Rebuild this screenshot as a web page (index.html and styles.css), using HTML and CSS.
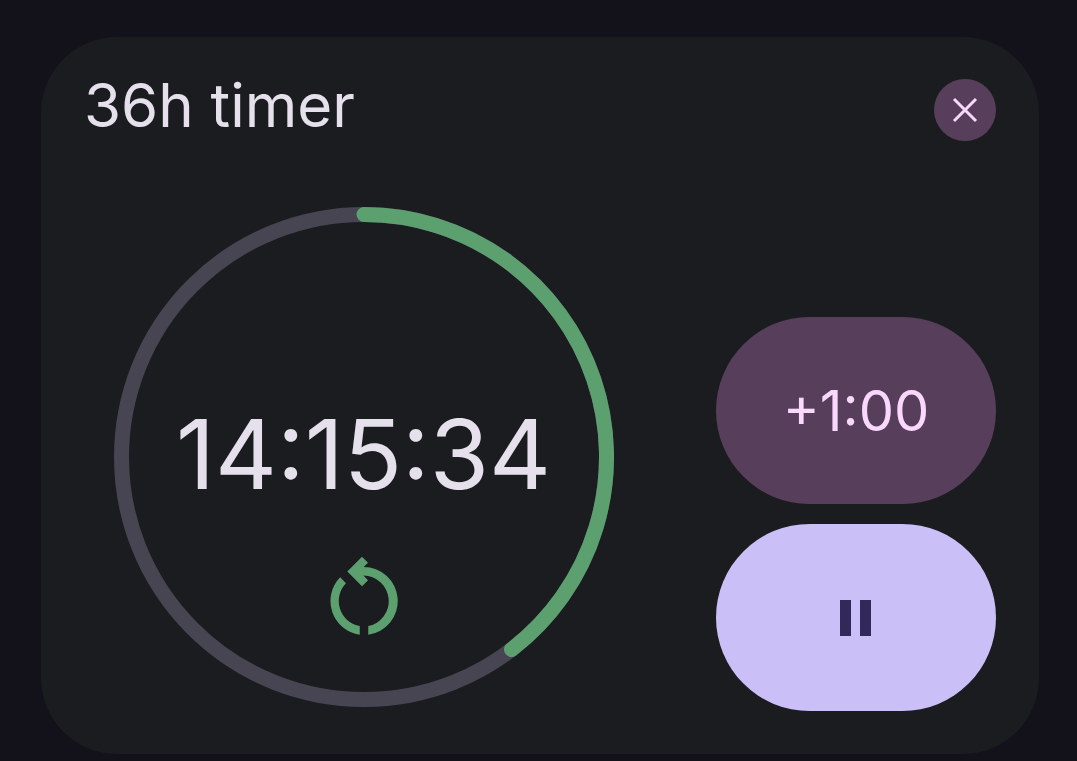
FILE: index.html
```html
<!DOCTYPE html>
<html lang="en">
<head>
<meta charset="utf-8">
<meta name="viewport" content="width=device-width, initial-scale=1">
<title>36h timer</title>
<link rel="stylesheet" href="styles.css">
</head>
<body>
<main class="card">
  <header class="card-header">
    <h1 class="title">36h timer</h1>
    <button class="close" type="button" aria-label="Close">
      <svg width="26" height="26" viewBox="0 0 26 26" aria-hidden="true"><path d="M2 2 24 24M24 2 2 24"/></svg>
    </button>
  </header>
  <div class="card-body">
    <div class="dial">
      <svg class="ring" viewBox="0 0 500 500" aria-hidden="true">
        <circle class="track" cx="250" cy="250" r="242.5"/>
        <path class="progress" d="M250 7.5A242.5 242.5 0 0 1 397.5 442.5"/>
      </svg>
      <div class="readout">
        <time class="time">14:15:34</time>
        <button class="reset" type="button" aria-label="Reset">
          <svg width="68" height="80" viewBox="0 0 68 80" aria-hidden="true">
            <path d="M33.4 11.3 38 6.7 32 .7 17.3 15.5 32 30.2 38 24.3 33.4 19.6A25.5 25.5 0 0 1 38.25 70.1V78.7A34 34 0 0 0 33.4 11Z"/>
            <path d="M10.2 21.2A34 34 0 0 0 29.75 78.7V70.1A25.5 25.5 0 0 1 16 27.2Z"/>
          </svg>
        </button>
      </div>
    </div>
    <div class="controls">
      <button class="pill add" type="button">+1:00</button>
      <button class="pill pause" type="button" aria-label="Pause">
        <svg width="32" height="36" viewBox="0 0 32 36" aria-hidden="true"><path d="M0 0H11V36H0ZM20 0H31V36H20Z"/></svg>
      </button>
    </div>
  </div>
</main>
</body>
</html>
```
FILE: styles.css
```css
* {
  box-sizing: border-box;
}

body {
  margin: 0;
  min-height: 100vh;
  padding: 37px 38px 7px 41px;
  display: flex;
  background: #13111a;
  color: #e5e0ec;
  font-family: Inter, Lato, sans-serif;
}

button {
  padding: 0;
  border: 0;
  background: none;
  color: inherit;
  font: inherit;
  cursor: pointer;
}

svg {
  display: block;
}

.card {
  flex: 1;
  padding: 42px 43px 43px 43px;
  display: flex;
  flex-direction: column;
  justify-content: space-between;
  border-radius: 76px;
  background: #1b1c20;
}

.card-header {
  display: flex;
  justify-content: space-between;
  align-items: flex-start;
}

.title {
  margin: 0;
  font-size: 60px;
  line-height: 53px;
  font-weight: 400;
}

.close {
  width: 62px;
  height: 62px;
  display: grid;
  place-items: center;
  border-radius: 50%;
  background: #573f5b;
}

.close path {
  fill: none;
  stroke: #fad8fd;
  stroke-width: 3;
}

.card-body {
  display: grid;
  grid-template-columns: 1fr 280px;
  gap: 73px;
  align-items: end;
}

.dial {
  width: 100%;
  max-width: 500px;
  margin-bottom: 4px;
  display: grid;
  justify-self: center;
}

.ring,
.readout {
  grid-area: 1 / 1;
}

.ring {
  width: 100%;
}

.track,
.progress {
  fill: none;
  stroke-width: 15;
}

.track {
  stroke: #484553;
}

.progress {
  stroke: #5ca06f;
  stroke-linecap: round;
}

.readout {
  padding-top: 197px;
  display: flex;
  flex-direction: column;
  align-items: center;
  gap: 52px;
}

.time {
  font-size: 96px;
  line-height: 100px;
}

.reset path {
  fill: #5ca06f;
}

.controls {
  display: flex;
  flex-direction: column;
  gap: 20px;
}

.pill {
  height: 187px;
  display: grid;
  place-items: center;
  border-radius: 94px;
}

.add {
  background: #573f5b;
  color: #fad8fd;
  font-size: 56px;
}

.pause {
  background: #cbbff7;
}

.pause path {
  fill: #33285a;
}
```
